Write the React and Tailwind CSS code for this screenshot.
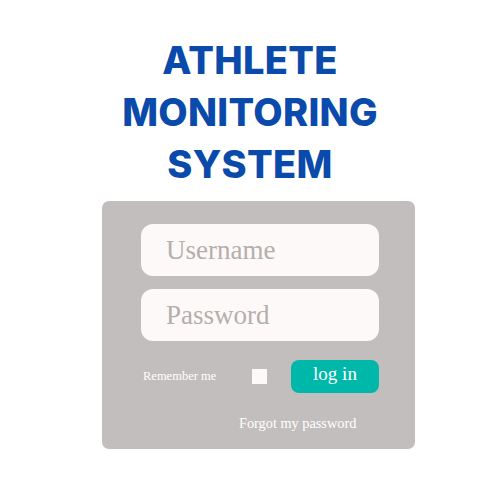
export default function App() {
  return (
    <div className="w-[500px] h-[500px] bg-white relative overflow-hidden">
      <div className="pt-[34px] flex flex-col items-center">
        <h1
          className="text-center text-[#0a4aaa] font-extrabold text-[38px] leading-[52px] tracking-[0.3px]"
          style={{ fontFamily: "Inter, 'Liberation Sans', sans-serif" }}
        >
          ATHLETE
          <br />
          MONITORING
          <br />
          SYSTEM
        </h1>
      </div>
      <div
        className="ml-[102px] mt-[11px] w-[313px] h-[248px] bg-[#c2bebd] rounded-[7px] pt-[23px] pl-[39px]"
        style={{ fontFamily: "'Liberation Serif', serif" }}
      >
        <div className="w-[238px] h-[52px] bg-[#fdf9f8] rounded-[12px] flex items-center pl-[25px] text-[27px] text-[#b5aeac]">
          Username
        </div>
        <div className="mt-[13px] w-[238px] h-[52px] bg-[#fdf9f8] rounded-[12px] flex items-center pl-[25px] text-[27px] text-[#b5aeac]">
          Password
        </div>
        <div className="mt-[19px] flex items-center">
          <span className="ml-[2px] text-[12.5px] text-white w-[109px]">Remember me</span>
          <span className="w-[15px] h-[15px] bg-[#fdf9f8]"></span>
          <div className="ml-[24px] w-[88px] h-[33px] bg-[#00b8a9] rounded-[8px] flex items-center justify-center text-white text-[19px] pb-[4px]">
            log in
          </div>
        </div>
        <div className="mt-[20px] pl-[98px] text-[14.3px] text-white">Forgot my password</div>
      </div>
    </div>
  );
}
